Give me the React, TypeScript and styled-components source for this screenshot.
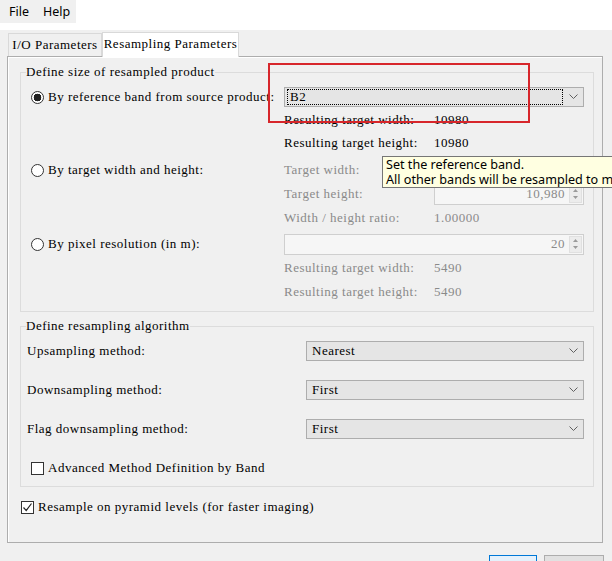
import * as React from 'react';
import styled, { createGlobalStyle } from 'styled-components';

const GlobalStyle = createGlobalStyle`
  * { box-sizing: border-box; }
  html, body { margin: 0; padding: 0; background: #f0f0f0; }
  body {
    font-family: "Liberation Serif", "Noto Sans CJK SC", serif;
    font-size: 13px;
    letter-spacing: 0.5px;
    color: #000;
  }
`;

const Window = styled.div`
  position: relative;
  width: 612px;
  height: 561px;
  overflow: hidden;
  background: #f0f0f0;
`;

// Menu bar
const MenuBar = styled.div`
  height: 30px;
  background: #fff;
  display: flex;
  align-items: flex-start;
`;

const MenuGroup = styled.div`
  display: flex;
  width: 76px;
  height: 23px;
  padding-left: 2px;
  background: #f0f0f0;
  font-family: "Noto Sans", sans-serif;
  font-size: 12.5px;
  letter-spacing: 0;
`;

const MenuItem = styled.span`
  padding: 0 7px;
  line-height: 23px;
`;

// Tabs
const TabStrip = styled.div`
  display: flex;
  align-items: flex-end;
  height: 26px;
  padding-left: 8px;
`;

const Tab = styled.div<{ $active?: boolean; $w: number }>`
  width: ${p => p.$w}px;
  height: ${p => (p.$active ? 25 : 23)}px;
  margin-bottom: ${p => (p.$active ? -1 : 0)}px;
  position: relative;
  z-index: ${p => (p.$active ? 1 : 0)};
  display: flex;
  align-items: center;
  justify-content: center;
  padding-bottom: ${p => (p.$active ? 2 : 0)}px;
  border: 1px solid #d9d9d9;
  border-bottom: none;
  background: ${p => (p.$active ? '#fff' : '#f0f0f0')};
  white-space: nowrap;
`;

// Main tab page
const Panel = styled.div`
  margin: 0 9px 0 7px;
  height: 487px;
  border: 1px solid #adadad;
  box-shadow: inset 1px 1px 0 #fff;
  padding: 8px 8px 0 12px;
  display: flex;
  flex-direction: column;
`;

const Group = styled.fieldset<{ $top?: number }>`
  margin: ${p => p.$top ?? 0}px 0 0 0;
  padding: 7px 9px 7px 6px;
  min-width: 0;
  border: 1px solid #dcdcdc;
`;

const Legend = styled.legend`
  padding: 0;
  margin-left: -1px;
  line-height: 14px;
`;

const Section = styled.div<{ $rows: string; $gap?: number }>`
  display: grid;
  grid-template-columns: 253px 150px 1fr;
  grid-template-rows: ${p => p.$rows};
  margin: ${p => p.$gap ?? 0}px 0 0 4px;
`;

const RadioLabel = styled.label`
  grid-column: 1;
  display: flex;
  align-items: center;
  gap: 4px;
  white-space: nowrap;
`;

const Radio = styled.span<{ $checked?: boolean }>`
  width: 13px;
  height: 13px;
  flex: none;
  border-radius: 50%;
  border: 1px solid #333;
  background: ${p =>
    p.$checked ? 'radial-gradient(circle, #222 0 3.6px, #fff 4.1px)' : '#fff'};
`;

const Text = styled.span<{ $col: number; $disabled?: boolean }>`
  grid-column: ${p => p.$col};
  align-self: center;
  color: ${p => (p.$disabled ? '#8a8a8a' : '#000')};
  white-space: nowrap;
`;

const Wide = styled.div<{ $from: number }>`
  grid-column: ${p => p.$from} / 4;
  display: flex;
  align-items: center;
`;

// Combo box
const Combo = styled.div`
  flex: 1;
  height: 20px;
  display: flex;
  align-items: center;
  padding: 1px 0 1px 2px;
  border: 1px solid #adadad;
  background: #e5e5e5;
`;

const ComboValue = styled.span<{ $focus?: boolean }>`
  flex: 1;
  height: 16px;
  line-height: 14px;
  padding-left: 2px;
  border: 1px dotted ${p => (p.$focus ? '#000' : 'transparent')};
`;

const ArrowBox = styled.span`
  width: 20px;
  display: flex;
  justify-content: center;
  align-items: center;
`;

// Spinner field
const Spin = styled.div`
  flex: 1;
  height: 21px;
  display: flex;
  align-items: center;
  border: 1px solid #cfcfcf;
  background: #f6f6f6;
  color: #8a8a8a;
`;

const SpinValue = styled.span`
  flex: 1;
  text-align: right;
  padding-right: 4px;
`;

const SpinButtons = styled.span`
  width: 13px;
  height: 17px;
  margin-right: 1px;
  display: flex;
  flex-direction: column;
  border: 1px solid #e0e0e0;
  background: #ececec;
`;

const SpinHalf = styled.span`
  flex: 1;
  display: flex;
  align-items: center;
  justify-content: center;
`;

// Algorithm rows
const AlgoGrid = styled.div`
  display: grid;
  grid-template-columns: 279px 1fr;
  grid-auto-rows: 22px;
  row-gap: 17px;
`;

const CheckRow = styled.label<{ $indent: number }>`
  grid-column: 1 / 3;
  display: flex;
  align-items: center;
  gap: 4px;
  margin-left: ${p => p.$indent}px;
  white-space: nowrap;
`;

const Box = styled.span`
  width: 13px;
  height: 13px;
  flex: none;
  display: flex;
  align-items: center;
  justify-content: center;
  border: 1px solid #333;
  background: #fff;
`;

const PyramidRow = styled(CheckRow)`
  margin-top: 13px;
  height: 14px;
`;

// Buttons
const ButtonBar = styled.div`
  display: flex;
  justify-content: flex-end;
  gap: 7px;
  margin-top: 12px;
  padding-right: 8px;
`;

const Button = styled.div<{ $default?: boolean; $w: number }>`
  width: ${p => p.$w}px;
  height: 23px;
  display: flex;
  align-items: center;
  justify-content: center;
  font-family: "Noto Sans", sans-serif;
  letter-spacing: 0;
  border: 1px solid ${p => (p.$default ? '#0078d7' : '#adadad')};
  background: ${p => (p.$default ? '#e5f1fb' : '#e1e1e1')};
`;

// Overlays
const Highlight = styled.div`
  position: absolute;
  left: 268px;
  top: 63px;
  width: 262px;
  height: 60px;
  border: 2px solid #d7262b;
  z-index: 5;
`;

const Tooltip = styled.div`
  position: absolute;
  left: 382px;
  top: 156px;
  height: 32px;
  padding: 0 3px;
  border: 1px solid #767676;
  background: #ffffe1;
  font-family: "Noto Sans", sans-serif;
  font-size: 12.6px;
  letter-spacing: 0;
  line-height: 15px;
  white-space: nowrap;
  z-index: 6;
`;

const Chevron = () => (
  <svg width="9" height="6" viewBox="0 0 9 6">
    <polyline points="0.5,0.5 4.5,4.5 8.5,0.5" fill="none" stroke="#606060" strokeWidth="1" />
  </svg>
);

const Tri = ({ up }: { up?: boolean }) => (
  <svg width="5" height="3" viewBox="0 0 5 3">
    <polygon points={up ? '0,3 5,3 2.5,0' : '0,0 5,0 2.5,3'} fill="#9a9a9a" />
  </svg>
);

const Check = () => (
  <svg width="11" height="11" viewBox="0 0 11 11">
    <polyline points="1.5,5.5 4.2,8.5 9.5,1.5" fill="none" stroke="#222" strokeWidth="1.2" />
  </svg>
);

const Select = ({ value, focus }: { value: string; focus?: boolean }) => (
  <Combo>
    <ComboValue $focus={focus}>{value}</ComboValue>
    <ArrowBox><Chevron /></ArrowBox>
  </Combo>
);

const Spinner = ({ value }: { value: string }) => (
  <Spin>
    <SpinValue>{value}</SpinValue>
    <SpinButtons>
      <SpinHalf><Tri up /></SpinHalf>
      <SpinHalf><Tri /></SpinHalf>
    </SpinButtons>
  </Spin>
);

export default function App() {
  return (
    <Window>
      <GlobalStyle />
      <MenuBar>
        <MenuGroup>
          <MenuItem>File</MenuItem>
          <MenuItem>Help</MenuItem>
        </MenuGroup>
      </MenuBar>

      <TabStrip>
        <Tab $w={94}>I/O Parameters</Tab>
        <Tab $w={137} $active>Resampling Parameters</Tab>
      </TabStrip>

      <Panel>
        <Group>
          <Legend>Define size of resampled product</Legend>

          <Section $rows="22px 23px 23px">
            <RadioLabel><Radio $checked />By reference band from source product:</RadioLabel>
            <Wide $from={2}><Select value="B2" focus /></Wide>
            <Text $col={2}>Resulting target width:</Text>
            <Text $col={3}>10980</Text>
            <Text $col={2}>Resulting target height:</Text>
            <Text $col={3}>10980</Text>
          </Section>

          <Section $rows="24px 24px 24px" $gap={4}>
            <RadioLabel><Radio />By target width and height:</RadioLabel>
            <Text $col={2} $disabled>Target width:</Text>
            <Wide $from={3}><Spinner value="10,980" /></Wide>
            <Text $col={2} $disabled>Target height:</Text>
            <Wide $from={3}><Spinner value="10,980" /></Wide>
            <Text $col={2} $disabled>Width / height ratio:</Text>
            <Text $col={3} $disabled>1.00000</Text>
          </Section>

          <Section $rows="24px 24px 24px" $gap={2}>
            <RadioLabel><Radio />By pixel resolution (in m):</RadioLabel>
            <Wide $from={2}><Spinner value="20" /></Wide>
            <Text $col={2} $disabled>Resulting target width:</Text>
            <Text $col={3} $disabled>5490</Text>
            <Text $col={2} $disabled>Resulting target height:</Text>
            <Text $col={3} $disabled>5490</Text>
          </Section>
        </Group>

        <Group $top={7}>
          <Legend>Define resampling algorithm</Legend>
          <AlgoGrid>
            <Text $col={1}>Upsampling method:</Text>
            <Wide $from={2}><Select value="Nearest" /></Wide>
            <Text $col={1}>Downsampling method:</Text>
            <Wide $from={2}><Select value="First" /></Wide>
            <Text $col={1}>Flag downsampling method:</Text>
            <Wide $from={2}><Select value="First" /></Wide>
            <CheckRow $indent={4}><Box />Advanced Method Definition by Band</CheckRow>
          </AlgoGrid>
        </Group>

        <PyramidRow $indent={1}><Box><Check /></Box>Resample on pyramid levels (for faster imaging)</PyramidRow>
      </Panel>

      <ButtonBar>
        <Button $w={48} $default>Run</Button>
        <Button $w={60}>Close</Button>
      </ButtonBar>

      <Highlight />
      <Tooltip>
        Set the reference band.<br />
        All other bands will be resampled to match its size and resolution.
      </Tooltip>
    </Window>
  );
}
